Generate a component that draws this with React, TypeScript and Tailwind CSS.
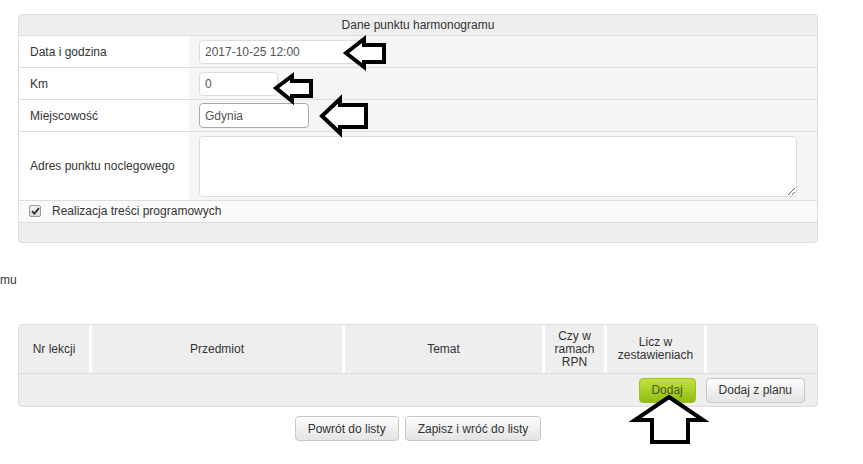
import React from "react"

function GreyButton({ children }: { children: React.ReactNode }) {
  return (
    <button className="h-[25px] rounded border border-[#c8c8c8] bg-gradient-to-b from-[#fdfdfd] to-[#e4e4e4] px-[12px] text-[12px] text-[#333]">
      {children}
    </button>
  )
}

function FormRow({ label, children, tall }: { label: string; children: React.ReactNode; tall?: boolean }) {
  return (
    <div className={`flex border-b border-[#ddd] ${tall ? "h-[69px]" : "h-[32px]"}`}>
      <div className="flex w-[170px] items-center bg-white pl-[11px] text-[#333]">{label}</div>
      <div className="flex flex-1 items-center bg-[#f5f5f5] pl-[10px] pr-[20px]">{children}</div>
    </div>
  )
}

function Arrows() {
  return (
    <svg className="pointer-events-none absolute left-0 top-0" width="863" height="464" viewBox="0 0 863 464">
      <g fill="white" stroke="black" strokeWidth="4" strokeLinejoin="miter">
        <polygon points="346,53 364,39 364,45 384,45 384,62 364,62 364,67" />
        <polygon points="276,88 292,76 292,81 311,81 311,96 292,96 292,101" />
        <polygon points="322,116 340,99 340,105 366,105 366,127 340,127 340,133" />
        <polygon points="669,397 703,420 688,420 688,442 652,442 652,420 635,420" />
      </g>
    </svg>
  )
}

export default function App() {
  return (
    <div className="relative h-[464px] w-[863px] bg-white pt-[14px] text-[12px] text-[#333]" style={{ fontFamily: '"Liberation Sans", Arial, sans-serif' }}>
      <div className="ml-[18px] w-[800px] overflow-hidden rounded border border-[#ddd] bg-[#eee]">
        <div className="h-[21px] border-b border-[#ddd] text-center leading-[20px]">Dane punktu harmonogramu</div>
        <FormRow label="Data i godzina">
          <input readOnly value="2017-10-25 12:00" className="h-[24px] w-[170px] rounded border border-[#ddd] bg-white px-[5px] text-[12px] text-[#555] outline-none" />
        </FormRow>
        <FormRow label="Km">
          <input readOnly value="0" className="h-[24px] w-[79px] rounded border border-[#ddd] bg-white px-[5px] text-[12px] text-[#555] outline-none" />
        </FormRow>
        <FormRow label="Miejscowość">
          <input readOnly value="Gdynia" className="h-[25px] w-[110px] rounded border border-[#a9a9a9] bg-white px-[5px] text-[12px] text-[#555] outline-none" />
        </FormRow>
        <FormRow label="Adres punktu noclegowego" tall>
          <textarea readOnly className="h-[61px] w-full rounded border border-[#ddd] bg-white outline-none" />
        </FormRow>
        <div className="flex h-[22px] items-center border-b border-[#ddd] bg-[#fafafa] pb-[1px] pl-[10px]">
          <span className="flex h-[12px] w-[12px] items-center justify-center rounded-[2px] border border-[#999] bg-gradient-to-b from-[#f4f4f4] to-[#dcdcdc]">
            <svg width="9" height="8" viewBox="0 0 9 8">
              <path d="M1 4.2 L3.4 6.6 L8 1.2" fill="none" stroke="#333" strokeWidth="1.8" />
            </svg>
          </span>
          <span className="ml-[11px]">Realizacja treści programowych</span>
        </div>
        <div className="h-[19px]" />
      </div>

      <div className="mt-[30px] leading-[14px]">mu</div>

      <div className="ml-[18px] mt-[37px] w-[800px] overflow-hidden rounded border border-[#ddd] bg-[#eee]">
        <div className="flex h-[49px] gap-[3px] border-b border-[#ddd] bg-white text-center leading-[13px]">
          <div className="flex w-[70px] items-center justify-center bg-[#eee]">Nr lekcji</div>
          <div className="flex w-[250px] items-center justify-center bg-[#eee]">Przedmiot</div>
          <div className="flex w-[197px] items-center justify-center bg-[#eee]">Temat</div>
          <div className="flex w-[59px] items-center justify-center bg-[#eee]">
            Czy w<br />ramach<br />RPN
          </div>
          <div className="flex w-[97px] items-center justify-center bg-[#eee]">
            Licz w<br />zestawieniach
          </div>
          <div className="flex-1 bg-[#eee]" />
        </div>
        <div className="flex h-[32px] items-center justify-end gap-[10px] pr-[12px]">
          <button className="h-[25px] w-[57px] rounded border border-[#9cc21e] bg-gradient-to-b from-[#c4e03e] to-[#8fbd0c] text-[12px] text-[#4b5a1a]">
            Dodaj
          </button>
          <GreyButton>Dodaj z planu</GreyButton>
        </div>
      </div>

      <div className="ml-[18px] mt-[9px] flex w-[800px] justify-center gap-[6px]">
        <GreyButton>Powrót do listy</GreyButton>
        <GreyButton>Zapisz i wróć do listy</GreyButton>
      </div>

      <Arrows />
    </div>
  )
}
